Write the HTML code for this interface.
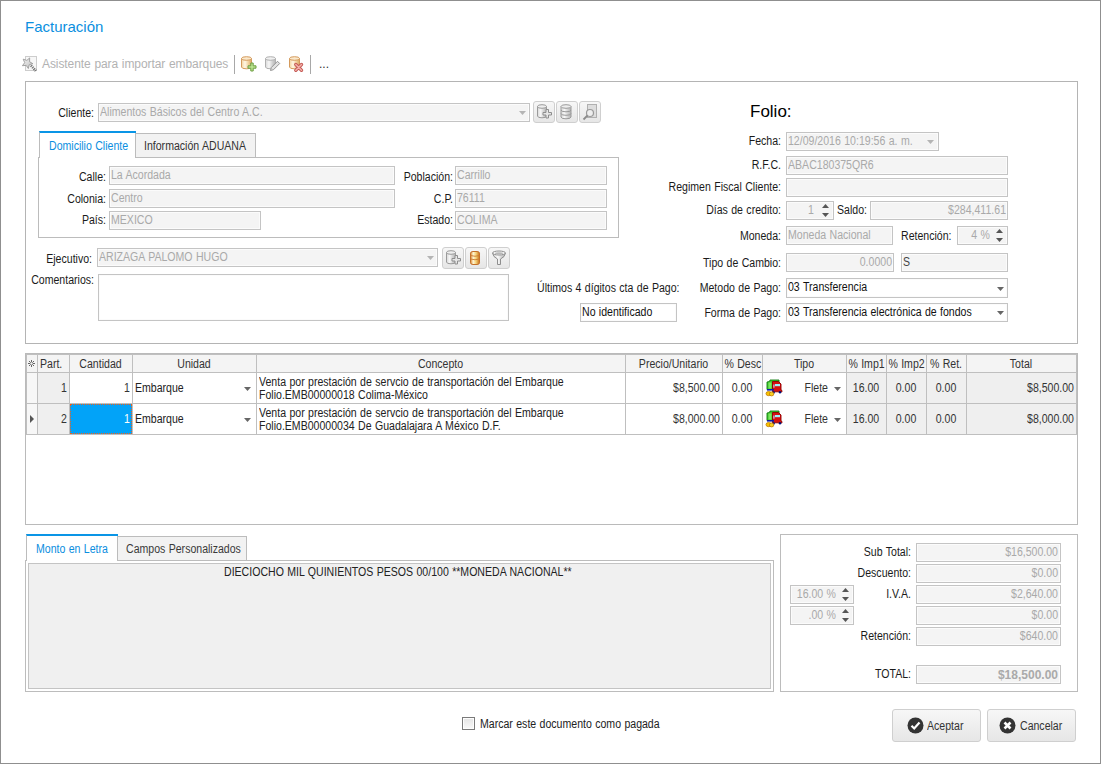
<!DOCTYPE html><html><head><meta charset="utf-8"><style>
html,body{margin:0;padding:0;background:#fff;width:1101px;height:764px;overflow:hidden}
*{box-sizing:border-box}
.t{position:absolute;font-family:"Liberation Sans",sans-serif;font-size:12px;line-height:13px;white-space:nowrap;letter-spacing:0px;word-spacing:0.5px;transform:scaleX(0.88);transform-origin:0 0}
.tr{transform-origin:100% 0}.tc{transform-origin:50% 0}.nt{transform:none}
.b{position:absolute;border:1px solid #c4c4c4;box-shadow:inset 0 0 0 1px #fbfbfb}
.l{position:absolute}
.btn{position:absolute;border:1px solid #cfcfcf;border-radius:3px;background:linear-gradient(#f7f7f7,#e6e6e6)}
svg{position:absolute;overflow:visible}
</style></head><body>

<div class="l" style="left:0;top:0;width:1101px;height:764px;border:1px solid #8f8f8f"></div>
<div class="t nt" style="left:25px;top:18px;font-size:15px;line-height:18px;color:#0b8fe0;letter-spacing:0">Facturación</div>
<svg style="left:18px;top:52px" width="24" height="24" viewBox="0 0 24 24">
<defs><linearGradient id="gw" x1="0" y1="0" x2="1" y2="1"><stop offset="0" stop-color="#fafafa"/><stop offset="1" stop-color="#b8b8b8"/></linearGradient></defs>
<rect x="7.5" y="4.5" width="11" height="14" fill="#f7f7f7" stroke="#cdcdcd"/>
<path d="M13 13.5 L17.8 18.8" stroke="#6e6e6e" stroke-width="2.6" stroke-dasharray="1.2 0.9"/>
<polygon points="11.67,5.93 11.58,9.74 14.86,11.69 11.20,12.78 10.36,16.50 8.20,13.35 4.40,13.71 6.72,10.68 5.21,7.17 8.81,8.45" fill="url(#gw)" stroke="#9a9a9a" stroke-width="0.9"/>
</svg>
<div class="t nt" style="left:42px;top:57px;font-size:12px;line-height:15px;color:#b2b2b2;letter-spacing:-0.08px">Asistente para importar embarques</div>
<div class="l" style="left:234px;top:55px;width:1px;height:19px;background:#a8a8a8"></div>
<svg style="left:240px;top:56px" width="18" height="16" viewBox="0 0 18 16">
<defs><linearGradient id="gy" x1="0" x2="1"><stop offset="0" stop-color="#f3d3a0"/><stop offset="0.35" stop-color="#fff6e4"/><stop offset="0.7" stop-color="#f0cf9a"/><stop offset="1" stop-color="#d9a565"/></linearGradient></defs>
<path d="M1.5 2.5 L1.5 11 A5 1.8 0 0 0 11.5 11 L11.5 2.5 Z" fill="url(#gy)" stroke="#d49a5c"/>
<ellipse cx="6.5" cy="2.5" rx="5" ry="1.8" fill="#fbe9cc" stroke="#d49a5c"/>
<path d="M8 9 h2.8 v-2.8 h2.4 v2.8 h2.8 v2.4 h-2.8 v2.8 h-2.4 v-2.8 h-2.8 Z" transform="translate(0,0.8)" fill="#b9e28e" stroke="#6e9e45" stroke-width="1"/>
</svg>
<svg style="left:264px;top:56px" width="17" height="16" viewBox="0 0 17 16">
<defs><linearGradient id="gg" x1="0" x2="1"><stop offset="0" stop-color="#d8d8d8"/><stop offset="0.35" stop-color="#f7f7f7"/><stop offset="0.7" stop-color="#d0d0d0"/><stop offset="1" stop-color="#b5b5b5"/></linearGradient></defs>
<path d="M1.5 2.5 L1.5 11 A5 1.8 0 0 0 11.5 11 L11.5 2.5 Z" fill="url(#gg)" stroke="#b0b0b0"/>
<ellipse cx="6.5" cy="2.5" rx="5" ry="1.8" fill="#f0f0f0" stroke="#b0b0b0"/>
<path d="M6.5 14.5 L7.3 11.5 L13.5 5.3 L15.7 7.5 L9.5 13.7 Z" fill="#e2e2e2" stroke="#8c8c8c" stroke-width="0.9"/>
</svg>
<svg style="left:288px;top:56px" width="17" height="16" viewBox="0 0 17 16">
<path d="M1.5 2.5 L1.5 11 A5 1.8 0 0 0 11.5 11 L11.5 2.5 Z" fill="url(#gy)" stroke="#d49a5c"/>
<ellipse cx="6.5" cy="2.5" rx="5" ry="1.8" fill="#fbe9cc" stroke="#d49a5c"/>
<path d="M7.8 8.5 L13.5 14.2 M13.5 8.5 L7.8 14.2" stroke="#c45a55" stroke-width="3.4" stroke-linecap="round"/>
<path d="M7.8 8.5 L13.5 14.2 M13.5 8.5 L7.8 14.2" stroke="#f4b0aa" stroke-width="1.5" stroke-linecap="round"/>
</svg>
<div class="l" style="left:310px;top:55px;width:1px;height:19px;background:#a8a8a8"></div>
<div class="t nt" style="left:319px;top:57px;font-size:12px;line-height:15px;color:#333;letter-spacing:0">...</div>
<div class="b" style="left:25px;top:81px;width:1053px;height:263px;background:#fff;border-color:#b4b4b4;box-shadow:none"></div>
<div class="t tr" style="left:-206px;width:300px;text-align:right;top:107px;color:#1a1a1a;">Cliente:</div>
<div class="b" style="left:98px;top:103px;width:432px;height:19px;background:#f4f4f4;border-color:#c4c4c4;"></div>
<div class="t" style="left:100px;top:106px;color:#a9a9a9;">Alimentos Básicos del Centro A.C.</div>
<svg style="left:519px;top:111px" width="7" height="4" viewBox="0 0 7 4"><polygon points="0,0 7,0 3.5,4" fill="#b4b4b4"/></svg>
<div class="btn" style="left:533px;top:101px;width:22px;height:22px"></div>
<svg style="left:536px;top:104px" width="16" height="16" viewBox="0 0 16 16">
<path d="M1.5 2.5 L1.5 12 A4.5 1.8 0 0 0 10.5 12 L10.5 2.5 Z" fill="url(#gg)" stroke="#9a9a9a"/>
<ellipse cx="6" cy="2.5" rx="4.5" ry="1.8" fill="#eee" stroke="#9a9a9a"/>
<path d="M8.5 8.5 h3 v-3 h2.5 v3 h3 v2.5 h-3 v3 h-2.5 v-3 h-3 Z" transform="translate(-1.5,0)" fill="#e6e6e6" stroke="#8e8e8e" stroke-width="1"/>
</svg>
<div class="btn" style="left:556px;top:101px;width:22px;height:22px"></div>
<svg style="left:558px;top:104px" width="16" height="16" viewBox="0 0 16 16">
<path d="M3 2.5 L3 13 A5 1.8 0 0 0 13 13 L13 2.5 Z" fill="url(#gg)" stroke="#9a9a9a"/>
<ellipse cx="8" cy="2.5" rx="5" ry="1.8" fill="#eee" stroke="#9a9a9a"/>
<path d="M3 6 A5 1.8 0 0 0 13 6 M3 9.5 A5 1.8 0 0 0 13 9.5" fill="none" stroke="#9a9a9a"/>
</svg>
<div class="btn" style="left:579px;top:101px;width:22px;height:22px"></div>
<svg style="left:582px;top:104px" width="16" height="16" viewBox="0 0 16 16">
<rect x="5.5" y="0.5" width="9" height="13" fill="#ddd" stroke="#b0b0b0"/>
<circle cx="8" cy="9" r="3.5" fill="#eee" stroke="#9a9a9a" stroke-width="1.2"/>
<path d="M5.5 11.5 L1.5 15.5" stroke="#8a8a8a" stroke-width="1.8"/>
</svg>
<div class="b" style="left:38px;top:157px;width:581px;height:81px;background:#fff;border-color:#bcbcbc;box-shadow:none"></div>
<div class="l" style="left:39px;top:131px;width:97px;height:27px;background:#fff;border-left:1px solid #bcbcbc;border-top:2px solid #0a95e6"></div>
<div class="l" style="left:38px;top:157px;width:1px;height:2px;background:#bcbcbc"></div>
<div class="t" style="left:49px;top:140px;color:#0a8ee0;">Domicilio Cliente</div>
<div class="l" style="left:135px;top:133px;width:121px;height:25px;background:#f2f2f2;border:1px solid #bcbcbc"></div>
<div class="t" style="left:144px;top:140px;color:#333;">Información ADUANA</div>
<div class="t tr" style="left:-194px;width:300px;text-align:right;top:171px;color:#1a1a1a;">Calle:</div>
<div class="b" style="left:109px;top:166px;width:286px;height:19px;background:#f4f4f4;border-color:#c4c4c4;"></div>
<div class="t" style="left:111px;top:169px;color:#a9a9a9;">La Acordada</div>
<div class="t tr" style="left:-194px;width:300px;text-align:right;top:193px;color:#1a1a1a;">Colonia:</div>
<div class="b" style="left:109px;top:189px;width:286px;height:19px;background:#f4f4f4;border-color:#c4c4c4;"></div>
<div class="t" style="left:111px;top:192px;color:#a9a9a9;">Centro</div>
<div class="t tr" style="left:-194px;width:300px;text-align:right;top:214px;color:#1a1a1a;">País:</div>
<div class="b" style="left:109px;top:211px;width:152px;height:19px;background:#f4f4f4;border-color:#c4c4c4;"></div>
<div class="t" style="left:111px;top:214px;color:#a9a9a9;">MEXICO</div>
<div class="t tr" style="left:153px;width:300px;text-align:right;top:171px;color:#1a1a1a;">Población:</div>
<div class="b" style="left:455px;top:166px;width:152px;height:19px;background:#f4f4f4;border-color:#c4c4c4;"></div>
<div class="t" style="left:457px;top:169px;color:#a9a9a9;">Carrillo</div>
<div class="t tr" style="left:153px;width:300px;text-align:right;top:193px;color:#1a1a1a;">C.P.</div>
<div class="b" style="left:455px;top:189px;width:152px;height:19px;background:#f4f4f4;border-color:#c4c4c4;"></div>
<div class="t" style="left:457px;top:192px;color:#a9a9a9;">76111</div>
<div class="t tr" style="left:153px;width:300px;text-align:right;top:214px;color:#1a1a1a;">Estado:</div>
<div class="b" style="left:455px;top:211px;width:152px;height:19px;background:#f4f4f4;border-color:#c4c4c4;"></div>
<div class="t" style="left:457px;top:214px;color:#a9a9a9;">COLIMA</div>
<div class="t tr" style="left:-208px;width:300px;text-align:right;top:253px;color:#1a1a1a;">Ejecutivo:</div>
<div class="b" style="left:97px;top:248px;width:341px;height:19px;background:#f4f4f4;border-color:#c4c4c4;"></div>
<div class="t" style="left:99px;top:251px;color:#a9a9a9;">ARIZAGA PALOMO HUGO</div>
<svg style="left:427px;top:256px" width="7" height="4" viewBox="0 0 7 4"><polygon points="0,0 7,0 3.5,4" fill="#b4b4b4"/></svg>
<div class="btn" style="left:442px;top:247px;width:22px;height:22px"></div>
<svg style="left:445px;top:250px" width="16" height="16" viewBox="0 0 16 16">
<path d="M1.5 2.5 L1.5 12 A4.5 1.8 0 0 0 10.5 12 L10.5 2.5 Z" fill="url(#gg)" stroke="#9a9a9a"/>
<ellipse cx="6" cy="2.5" rx="4.5" ry="1.8" fill="#eee" stroke="#9a9a9a"/>
<path d="M8.5 8.5 h3 v-3 h2.5 v3 h3 v2.5 h-3 v3 h-2.5 v-3 h-3 Z" transform="translate(-1.5,0)" fill="#e6e6e6" stroke="#8e8e8e" stroke-width="1"/>
</svg>
<div class="btn" style="left:465px;top:247px;width:22px;height:22px"></div>
<svg style="left:467px;top:250px" width="16" height="16" viewBox="0 0 16 16">
<defs><linearGradient id="go" x1="0" x2="1"><stop offset="0" stop-color="#d9822a"/><stop offset="0.3" stop-color="#fff7d6"/><stop offset="0.6" stop-color="#f6d37a"/><stop offset="1" stop-color="#c8701a"/></linearGradient></defs>
<rect x="3.5" y="1.5" width="9" height="13" rx="2.5" ry="1.8" fill="url(#go)" stroke="#c4702a"/>
<path d="M3.5 5.5 Q8 7 12.5 5.5 M3.5 9 Q8 10.5 12.5 9" fill="none" stroke="#c97a30" stroke-width="0.9"/>
</svg>
<div class="btn" style="left:488px;top:247px;width:22px;height:22px"></div>
<svg style="left:491px;top:250px" width="16" height="16" viewBox="0 0 16 16">
<defs><linearGradient id="gf" x1="0" x2="1"><stop offset="0" stop-color="#cfcfcf"/><stop offset="0.4" stop-color="#fafafa"/><stop offset="1" stop-color="#b0b0b0"/></linearGradient></defs>
<path d="M1.5 3 Q2 7 6.5 9 L6.5 14.5 L9.5 14.5 L9.5 9 Q14 7 14.5 3" fill="url(#gf)" stroke="#8e8e8e"/>
<ellipse cx="8" cy="3" rx="6.5" ry="2" fill="#f6f6f6" stroke="#8e8e8e"/>
<ellipse cx="8" cy="3.3" rx="4" ry="1" fill="#b8b8b8"/>
</svg>
<div class="t tr" style="left:-206px;width:300px;text-align:right;top:274px;color:#1a1a1a;">Comentarios:</div>
<div class="b" style="left:98px;top:274px;width:411px;height:47px;background:#fff;border-color:#c4c4c4;"></div>
<div class="t nt" style="left:750px;top:102px;font-size:17px;line-height:20px;color:#000;letter-spacing:0">Folio:</div>
<div class="t tr" style="left:481px;width:300px;text-align:right;top:135px;color:#1a1a1a;">Fecha:</div>
<div class="b" style="left:786px;top:132px;width:153px;height:19px;background:#f4f4f4;border-color:#c4c4c4;"></div>
<div class="t" style="left:788px;top:135px;color:#a9a9a9;">12/09/2016 10:19:56 a. m.</div>
<svg style="left:927px;top:140px" width="7" height="4" viewBox="0 0 7 4"><polygon points="0,0 7,0 3.5,4" fill="#b4b4b4"/></svg>
<div class="t tr" style="left:481px;width:300px;text-align:right;top:159px;color:#1a1a1a;">R.F.C.</div>
<div class="b" style="left:786px;top:156px;width:222px;height:19px;background:#f4f4f4;border-color:#c4c4c4;"></div>
<div class="t" style="left:788px;top:159px;color:#a9a9a9;">ABAC180375QR6</div>
<div class="t tr" style="left:481px;width:300px;text-align:right;top:181px;color:#1a1a1a;">Regimen Fiscal Cliente:</div>
<div class="b" style="left:786px;top:178px;width:222px;height:19px;background:#f4f4f4;border-color:#c4c4c4;"></div>
<div class="t tr" style="left:481px;width:300px;text-align:right;top:204px;color:#1a1a1a;">Días de credito:</div>
<div class="b" style="left:786px;top:201px;width:48px;height:19px;background:#f4f4f4;border-color:#c4c4c4;"></div>
<div class="t tr" style="left:794px;width:20px;text-align:right;top:204px;color:#a9a9a9;">1</div>
<svg style="left:822px;top:204px" width="7" height="4" viewBox="0 0 7 4"><polygon points="0,4 7,4 3.5,0" fill="#555"/></svg>
<svg style="left:822px;top:213px" width="7" height="4" viewBox="0 0 7 4"><polygon points="0,0 7,0 3.5,4" fill="#555"/></svg>
<div class="t" style="left:837px;top:204px;color:#1a1a1a;">Saldo:</div>
<div class="b" style="left:870px;top:201px;width:138px;height:19px;background:#f4f4f4;border-color:#c4c4c4;"></div>
<div class="t tr" style="left:706px;width:300px;text-align:right;top:204px;color:#a9a9a9;">$284,411.61</div>
<div class="t tr" style="left:481px;width:300px;text-align:right;top:230px;color:#1a1a1a;">Moneda:</div>
<div class="b" style="left:786px;top:226px;width:107px;height:19px;background:#f4f4f4;border-color:#c4c4c4;"></div>
<div class="t" style="left:788px;top:229px;color:#a9a9a9;">Moneda Nacional</div>
<div class="t" style="left:901px;top:230px;color:#1a1a1a;">Retención:</div>
<div class="b" style="left:957px;top:226px;width:51px;height:19px;background:#f4f4f4;border-color:#c4c4c4;"></div>
<div class="t tr" style="left:960px;width:30px;text-align:right;top:229px;color:#a9a9a9;">4 %</div>
<svg style="left:996px;top:229px" width="7" height="4" viewBox="0 0 7 4"><polygon points="0,4 7,4 3.5,0" fill="#555"/></svg>
<svg style="left:996px;top:238px" width="7" height="4" viewBox="0 0 7 4"><polygon points="0,0 7,0 3.5,4" fill="#555"/></svg>
<div class="t tr" style="left:481px;width:300px;text-align:right;top:257px;color:#1a1a1a;">Tipo de Cambio:</div>
<div class="b" style="left:786px;top:253px;width:108px;height:19px;background:#f4f4f4;border-color:#c4c4c4;"></div>
<div class="t tr" style="left:592px;width:300px;text-align:right;top:256px;color:#a9a9a9;">0.0000</div>
<div class="b" style="left:901px;top:253px;width:107px;height:19px;background:#f4f4f4;border-color:#c4c4c4;"></div>
<div class="t" style="left:903px;top:256px;color:#444;">S</div>
<div class="t" style="left:537px;top:282px;color:#1a1a1a;">Últimos 4 dígitos cta de Pago:</div>
<div class="t tr" style="left:481px;width:300px;text-align:right;top:282px;color:#1a1a1a;">Metodo de Pago:</div>
<div class="b" style="left:786px;top:278px;width:222px;height:20px;background:#fff;border-color:#c4c4c4;"></div>
<div class="t" style="left:788px;top:281px;color:#111;">03 Transferencia</div>
<svg style="left:997px;top:287px" width="7" height="4" viewBox="0 0 7 4"><polygon points="0,0 7,0 3.5,4" fill="#666"/></svg>
<div class="b" style="left:580px;top:303px;width:97px;height:19px;background:#fff;border-color:#c4c4c4;"></div>
<div class="t" style="left:582px;top:306px;color:#111;">No identificado</div>
<div class="t tr" style="left:481px;width:300px;text-align:right;top:307px;color:#1a1a1a;">Forma de Pago:</div>
<div class="b" style="left:786px;top:303px;width:222px;height:19px;background:#fff;border-color:#c4c4c4;"></div>
<div class="t" style="left:788px;top:306px;color:#111;">03 Transferencia electrónica de fondos</div>
<svg style="left:997px;top:311px" width="7" height="4" viewBox="0 0 7 4"><polygon points="0,0 7,0 3.5,4" fill="#666"/></svg>
<div class="b" style="left:25px;top:353px;width:1053px;height:172px;background:#fff;border-color:#bababa;box-shadow:none"></div>
<div class="l" style="left:26px;top:354px;width:1051px;height:18px;background:#f4f4f4"></div>
<div class="l" style="left:26px;top:372px;width:11px;height:62px;background:#f7f7f7"></div>
<div class="l" style="left:37px;top:372px;width:32px;height:62px;background:#efefef"></div>
<div class="l" style="left:846px;top:372px;width:231px;height:62px;background:#efefef"></div>
<div class="l" style="left:26px;top:354px;width:1051px;height:1px;background:#bfbfbf"></div>
<div class="l" style="left:26px;top:372px;width:1051px;height:1px;background:#bfbfbf"></div>
<div class="l" style="left:26px;top:403px;width:1051px;height:1px;background:#bfbfbf"></div>
<div class="l" style="left:26px;top:434px;width:1051px;height:1px;background:#bfbfbf"></div>
<div class="l" style="left:26px;top:354px;width:1px;height:81px;background:#bfbfbf"></div>
<div class="l" style="left:37px;top:354px;width:1px;height:81px;background:#bfbfbf"></div>
<div class="l" style="left:69px;top:354px;width:1px;height:81px;background:#bfbfbf"></div>
<div class="l" style="left:132px;top:354px;width:1px;height:81px;background:#bfbfbf"></div>
<div class="l" style="left:256px;top:354px;width:1px;height:81px;background:#bfbfbf"></div>
<div class="l" style="left:625px;top:354px;width:1px;height:81px;background:#bfbfbf"></div>
<div class="l" style="left:722px;top:354px;width:1px;height:81px;background:#bfbfbf"></div>
<div class="l" style="left:762px;top:354px;width:1px;height:81px;background:#bfbfbf"></div>
<div class="l" style="left:846px;top:354px;width:1px;height:81px;background:#bfbfbf"></div>
<div class="l" style="left:886px;top:354px;width:1px;height:81px;background:#bfbfbf"></div>
<div class="l" style="left:926px;top:354px;width:1px;height:81px;background:#bfbfbf"></div>
<div class="l" style="left:966px;top:354px;width:1px;height:81px;background:#bfbfbf"></div>
<div class="l" style="left:1076px;top:354px;width:1px;height:81px;background:#bfbfbf"></div>
<div class="l" style="left:70px;top:404px;width:62px;height:30px;background:#02a3f8;border:1px dotted #f0601a"></div>
<svg style="left:28px;top:360px" width="8" height="8" viewBox="0 0 8 8"><path d="M3.5 0 V7 M0 3.5 H7 M1 1 L6 6 M6 1 L1 6" stroke="#555" stroke-width="0.9"/><circle cx="3.5" cy="3.5" r="1.2" fill="#f4f4f4"/></svg>
<div class="t" style="left:40px;top:358px;color:#333;">Part.</div>
<div class="t tc" style="left:69px;width:63px;text-align:center;top:358px;color:#333;">Cantidad</div>
<div class="t tc" style="left:132px;width:124px;text-align:center;top:358px;color:#333;">Unidad</div>
<div class="t tc" style="left:256px;width:369px;text-align:center;top:358px;color:#333;">Concepto</div>
<div class="t tc" style="left:625px;width:97px;text-align:center;top:358px;color:#333;">Precio/Unitario</div>
<div class="t tc" style="left:722px;width:40px;text-align:center;top:358px;color:#333;">% Desc</div>
<div class="t tc" style="left:762px;width:84px;text-align:center;top:358px;color:#333;">Tipo</div>
<div class="t tc" style="left:846px;width:40px;text-align:center;top:358px;color:#333;">% Imp1</div>
<div class="t tc" style="left:886px;width:40px;text-align:center;top:358px;color:#333;">% Imp2</div>
<div class="t tc" style="left:926px;width:40px;text-align:center;top:358px;color:#333;">% Ret.</div>
<div class="t tc" style="left:966px;width:110px;text-align:center;top:358px;color:#333;">Total</div>
<div class="l" style="left:30px;top:415px;width:0;height:0;border-top:4px solid transparent;border-bottom:4px solid transparent;border-left:4px solid #555"></div>
<div class="t tr" style="left:-233px;width:300px;text-align:right;top:382px;color:#333;">1</div>
<div class="t tr" style="left:-170px;width:300px;text-align:right;top:382px;color:#333;">1</div>
<div class="t" style="left:135px;top:382px;color:#222;">Embarque</div>
<svg style="left:244px;top:387px" width="7" height="4" viewBox="0 0 7 4"><polygon points="0,0 7,0 3.5,4" fill="#666"/></svg>
<div class="t" style="left:259px;top:376px;color:#222;">Venta por prestación de servcio de transportación del Embarque</div>
<div class="t" style="left:259px;top:389px;color:#222;">Folio.EMB00000018 Colima-México</div>
<div class="t tr" style="left:420px;width:300px;text-align:right;top:382px;color:#333;">$8,500.00</div>
<div class="t tc" style="left:722px;width:40px;text-align:center;top:382px;color:#333;">0.00</div>
<svg style="left:764px;top:376px" width="22" height="22" viewBox="0 0 22 22">
<path d="M3 6 L5.5 5.5 L6 4 L15 4 L15 7 L8.5 7 L8.5 13.5 L3 13.5 Z" fill="#3ec62e" stroke="#0e7a0e" stroke-width="0.9"/>
<rect x="4.5" y="6.5" width="3" height="6" fill="#7ee860"/>
<path d="M8.5 5.5 L14.5 5.5 L16 7 L17 8 L17 14 L18 14.5 L18 15.8 L8.5 15.8 Z" fill="#d61010" stroke="#8c0000" stroke-width="0.9"/>
<rect x="11" y="8" width="5" height="2.2" fill="#9cf2ff"/>
<rect x="9.3" y="8.5" width="1.2" height="3.2" fill="#c9c6f0"/>
<rect x="3" y="13" width="7" height="1.6" fill="#0a1aa8"/>
<circle cx="9.6" cy="16.4" r="1.2" fill="#04107a"/>
<circle cx="16" cy="16.3" r="1.2" fill="#04107a"/>
<ellipse cx="4.6" cy="17.6" rx="2.6" ry="2.1" fill="#f6c400" stroke="#c27a00" stroke-width="0.8"/>
<ellipse cx="7.6" cy="17.9" rx="2.2" ry="2" fill="#f9d020" stroke="#c27a00" stroke-width="0.8"/>
</svg>
<div class="t tr" style="left:528px;width:300px;text-align:right;top:382px;color:#333;">Flete</div>
<svg style="left:834px;top:387px" width="7" height="4" viewBox="0 0 7 4"><polygon points="0,0 7,0 3.5,4" fill="#666"/></svg>
<div class="t tc" style="left:846px;width:40px;text-align:center;top:382px;color:#333;">16.00</div>
<div class="t tc" style="left:886px;width:40px;text-align:center;top:382px;color:#333;">0.00</div>
<div class="t tc" style="left:926px;width:40px;text-align:center;top:382px;color:#333;">0.00</div>
<div class="t tr" style="left:774px;width:300px;text-align:right;top:382px;color:#333;">$8,500.00</div>
<div class="t tr" style="left:-233px;width:300px;text-align:right;top:413px;color:#333;">2</div>
<div class="t tr" style="left:-170px;width:300px;text-align:right;top:413px;color:#fff;">1</div>
<div class="t" style="left:135px;top:413px;color:#222;">Embarque</div>
<svg style="left:244px;top:418px" width="7" height="4" viewBox="0 0 7 4"><polygon points="0,0 7,0 3.5,4" fill="#666"/></svg>
<div class="t" style="left:259px;top:407px;color:#222;">Venta por prestación de servcio de transportación del Embarque</div>
<div class="t" style="left:259px;top:420px;color:#222;">Folio.EMB00000034 De Guadalajara A México D.F.</div>
<div class="t tr" style="left:420px;width:300px;text-align:right;top:413px;color:#333;">$8,000.00</div>
<div class="t tc" style="left:722px;width:40px;text-align:center;top:413px;color:#333;">0.00</div>
<svg style="left:764px;top:407px" width="22" height="22" viewBox="0 0 22 22">
<path d="M3 6 L5.5 5.5 L6 4 L15 4 L15 7 L8.5 7 L8.5 13.5 L3 13.5 Z" fill="#3ec62e" stroke="#0e7a0e" stroke-width="0.9"/>
<rect x="4.5" y="6.5" width="3" height="6" fill="#7ee860"/>
<path d="M8.5 5.5 L14.5 5.5 L16 7 L17 8 L17 14 L18 14.5 L18 15.8 L8.5 15.8 Z" fill="#d61010" stroke="#8c0000" stroke-width="0.9"/>
<rect x="11" y="8" width="5" height="2.2" fill="#9cf2ff"/>
<rect x="9.3" y="8.5" width="1.2" height="3.2" fill="#c9c6f0"/>
<rect x="3" y="13" width="7" height="1.6" fill="#0a1aa8"/>
<circle cx="9.6" cy="16.4" r="1.2" fill="#04107a"/>
<circle cx="16" cy="16.3" r="1.2" fill="#04107a"/>
<ellipse cx="4.6" cy="17.6" rx="2.6" ry="2.1" fill="#f6c400" stroke="#c27a00" stroke-width="0.8"/>
<ellipse cx="7.6" cy="17.9" rx="2.2" ry="2" fill="#f9d020" stroke="#c27a00" stroke-width="0.8"/>
</svg>
<div class="t tr" style="left:528px;width:300px;text-align:right;top:413px;color:#333;">Flete</div>
<svg style="left:834px;top:418px" width="7" height="4" viewBox="0 0 7 4"><polygon points="0,0 7,0 3.5,4" fill="#666"/></svg>
<div class="t tc" style="left:846px;width:40px;text-align:center;top:413px;color:#333;">16.00</div>
<div class="t tc" style="left:886px;width:40px;text-align:center;top:413px;color:#333;">0.00</div>
<div class="t tc" style="left:926px;width:40px;text-align:center;top:413px;color:#333;">0.00</div>
<div class="t tr" style="left:774px;width:300px;text-align:right;top:413px;color:#333;">$8,000.00</div>
<div class="b" style="left:25px;top:560px;width:749px;height:132px;background:#fff;border-color:#bcbcbc;box-shadow:none"></div>
<div class="b" style="left:28px;top:563px;width:743px;height:126px;background:#f0f0f0;border-color:#c4c4c4;box-shadow:none"></div>
<div class="l" style="left:26px;top:534px;width:92px;height:27px;background:#fff;border-left:1px solid #bcbcbc;border-top:2px solid #0a95e6"></div>
<div class="t" style="left:36px;top:543px;color:#0a8ee0;">Monto en Letra</div>
<div class="l" style="left:117px;top:536px;width:130px;height:25px;background:#f2f2f2;border:1px solid #bcbcbc"></div>
<div class="t" style="left:126px;top:543px;color:#3a3a3a;">Campos Personalizados</div>
<div class="t" style="left:224px;top:566px;color:#222;">DIECIOCHO MIL QUINIENTOS PESOS 00/100 **MONEDA NACIONAL**</div>
<div class="b" style="left:780px;top:534px;width:298px;height:158px;background:#fff;border-color:#bcbcbc;box-shadow:none"></div>
<div class="t tr" style="left:611px;width:300px;text-align:right;top:546px;color:#1a1a1a;">Sub Total:</div>
<div class="b" style="left:916px;top:543px;width:145px;height:19px;background:#f4f4f4;border-color:#c4c4c4;"></div>
<div class="t tr" style="left:758px;width:300px;text-align:right;top:546px;color:#a9a9a9;">$16,500.00</div>
<div class="t tr" style="left:611px;width:300px;text-align:right;top:567px;color:#1a1a1a;">Descuento:</div>
<div class="b" style="left:916px;top:564px;width:145px;height:19px;background:#f4f4f4;border-color:#c4c4c4;"></div>
<div class="t tr" style="left:758px;width:300px;text-align:right;top:567px;color:#a9a9a9;">$0.00</div>
<div class="t tr" style="left:611px;width:300px;text-align:right;top:588px;color:#1a1a1a;">I.V.A.</div>
<div class="b" style="left:916px;top:585px;width:145px;height:19px;background:#f4f4f4;border-color:#c4c4c4;"></div>
<div class="t tr" style="left:758px;width:300px;text-align:right;top:588px;color:#a9a9a9;">$2,640.00</div>
<div class="b" style="left:916px;top:606px;width:145px;height:19px;background:#f4f4f4;border-color:#c4c4c4;"></div>
<div class="t tr" style="left:758px;width:300px;text-align:right;top:609px;color:#a9a9a9;">$0.00</div>
<div class="t tr" style="left:611px;width:300px;text-align:right;top:630px;color:#1a1a1a;">Retención:</div>
<div class="b" style="left:916px;top:627px;width:145px;height:19px;background:#f4f4f4;border-color:#c4c4c4;"></div>
<div class="t tr" style="left:758px;width:300px;text-align:right;top:630px;color:#a9a9a9;">$640.00</div>
<div class="t tr" style="left:611px;width:300px;text-align:right;top:668px;color:#1a1a1a;">TOTAL:</div>
<div class="b" style="left:916px;top:665px;width:145px;height:19px;background:#f4f4f4;border-color:#c4c4c4;"></div>
<div class="t tr" style="left:758px;width:300px;text-align:right;top:669px;color:#aaa;font-size:12px;letter-spacing:0;transform:none"><b>$18,500.00</b></div>
<div class="b" style="left:790px;top:585px;width:64px;height:19px;background:#f4f4f4;border-color:#c4c4c4;"></div>
<div class="t tr" style="left:536px;width:300px;text-align:right;top:588px;color:#a9a9a9;">16.00 %</div>
<svg style="left:842px;top:588px" width="7" height="4" viewBox="0 0 7 4"><polygon points="0,4 7,4 3.5,0" fill="#555"/></svg>
<svg style="left:842px;top:597px" width="7" height="4" viewBox="0 0 7 4"><polygon points="0,0 7,0 3.5,4" fill="#555"/></svg>
<div class="b" style="left:790px;top:606px;width:64px;height:19px;background:#f4f4f4;border-color:#c4c4c4;"></div>
<div class="t tr" style="left:536px;width:300px;text-align:right;top:609px;color:#a9a9a9;">.00 %</div>
<svg style="left:842px;top:609px" width="7" height="4" viewBox="0 0 7 4"><polygon points="0,4 7,4 3.5,0" fill="#555"/></svg>
<svg style="left:842px;top:618px" width="7" height="4" viewBox="0 0 7 4"><polygon points="0,0 7,0 3.5,4" fill="#555"/></svg>
<div class="l" style="left:462px;top:717px;width:13px;height:13px;border:1px solid #7a7a7a;box-shadow:inset 0 0 0 1px #fdfdfd;background:linear-gradient(#e4e4e4,#f9f9f9)"></div>
<div class="t" style="left:480px;top:718px;color:#222;">Marcar este documento como pagada</div>
<div class="btn" style="left:892px;top:709px;width:89px;height:33px"></div>
<svg style="left:907px;top:717px" width="17" height="17" viewBox="0 0 17 17"><circle cx="8.5" cy="8.5" r="8" fill="#333"/><path d="M4.5 8.8 L7.2 11.5 L12.5 5.5" fill="none" stroke="#fff" stroke-width="2.2"/></svg>
<div class="t" style="left:927px;top:720px;color:#333;">Aceptar</div>
<div class="btn" style="left:987px;top:709px;width:89px;height:33px"></div>
<svg style="left:999px;top:717px" width="17" height="17" viewBox="0 0 17 17"><circle cx="8.5" cy="8.5" r="8" fill="#333"/><path d="M5.5 5.5 L11.5 11.5 M11.5 5.5 L5.5 11.5" fill="none" stroke="#fff" stroke-width="2.6"/></svg>
<div class="t" style="left:1020px;top:720px;color:#333;">Cancelar</div>
</body></html>
